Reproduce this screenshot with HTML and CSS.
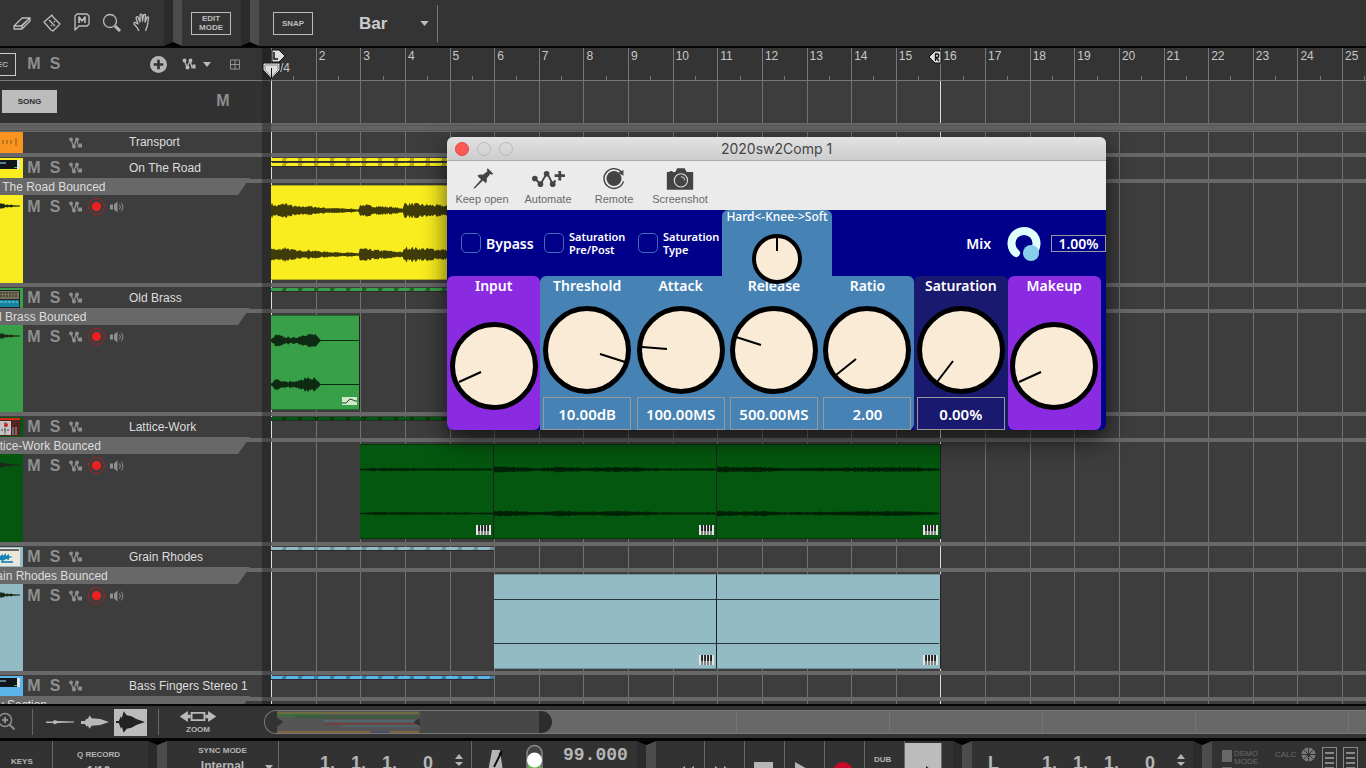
FILE: index.html
```html
<!DOCTYPE html>
<html lang="en">
<head>
<meta charset="utf-8">
<title>Sequencer</title>
<link rel="stylesheet" href="styles.css">
</head>
<body>
<svg class="defs" aria-hidden="true">
  <symbol id="auto" viewBox="0 0 16 14"><path d="M3 3.500 5.500 10.500 8.500 3.500 10.500 10.500 12.500 9.500" fill="none" stroke="currentColor" stroke-width="1.300"/><circle cx="3" cy="3.500" r="1.900"/><circle cx="6" cy="10.500" r="2"/><circle cx="9" cy="3.500" r="1.900"/><rect x="11" y="7.500" width="3" height="4"/></symbol>
  <symbol id="speaker" viewBox="0 0 16 14"><path d="M1 4.500h3v5H1zM5 4.500 8.500 1.500v11L5 9.500z"/><path d="M10.500 4.500q1.700 2.500 0 5M12.300 2.700q3.200 4.300 0 8.600" fill="none" stroke="currentColor"/></symbol>
  <symbol id="keys" viewBox="0 0 15 10"><path d="M0 0h15v10H0z" fill="#dfe8e2"/><path d="M3 0v10M6 0v10M9 0v10M12 0v10" stroke="#222"/><path d="M2.200 0h1.800v6H2.200zM5.200 0H7v6H5.200zM8.200 0H10v6H8.200zM11.200 0H13v6h-1.800z" fill="#222"/></symbol>
  <symbol id="mini" viewBox="0 0 20 12"><path d="M0 4 1 3 2.500 4 4 3.500 5 5 8 4.500 9 5.300 11 4.500 13 5.300 20 5.500 20 6.500 13 6.700 11 7.500 9 6.700 8 7.500 5 7 4 8.500 2.500 8 1 9 0 8z"/></symbol>
  <symbol id="synth" viewBox="0 0 23 21"><path d="M0 2h20v9H0z" fill="#dfe3e6"/><path d="M0 2h17v9H0z" fill="#10151a"/><path d="M0 4h6v2H0z" fill="#5d7c90"/><path d="M14 9h3v1h-3z" fill="#2fbf55"/></symbol>
  <symbol id="brass" viewBox="0 0 23 21"><path d="M0 2h20v18H0z" fill="#222"/><path d="M0 3h19v8H0z" fill="#77705d"/><path d="M0 5h18M0 8h18" stroke="#23211c" stroke-dasharray="2 1"/><path d="M0 12h19v7H0z" fill="#1684a0"/><path d="M0 14h18" stroke="#70d3e6" stroke-dasharray="3 1"/></symbol>
  <symbol id="drum" viewBox="0 0 23 21"><path d="M0 1h20v18H0z" fill="#522"/><path d="M0 1h20v2H0z" fill="#d22a15"/><path d="M0 4h11v14H0z" fill="#c3c3c3"/><path d="M1 13h9M5 5v13" stroke="#444" stroke-dasharray="2 1"/><circle cx="6" cy="8" r="2" fill="#c22"/><path d="M13 10v8M16 10v8" stroke="#aaa"/></symbol>
  <symbol id="grain" viewBox="0 0 23 21"><path d="M0 1h20v18H0z" fill="#e9e7d9"/><path d="M0 2h19v2H0z" fill="#666"/><path d="M0 9 3 7v2l3-3v3l3-2v2l4 1-4 1v2l-3-1-3 2-3-1z" fill="#1683b5"/><path d="M1 15h12" stroke="#3a95bb" stroke-width="2"/></symbol>
  <symbol id="rounds" viewBox="0 0 10 14"><path d="M5 1 9 6H1zM5 13 9 9H1z"/></symbol>
</svg>

<header class="toolbar">
  <div class="tools">
    <button aria-label="Eraser"><svg viewBox="0 0 20 20" class="line"><path d="M2 13 10 5h8l-8 8v3H2zM2 13h7l9-8v3l-8 8"/></svg></button>
    <button aria-label="Razor"><svg viewBox="0 0 20 20" class="line"><path d="M2 9 10 2l1 2 7 7-7 7-2-1z"/><path d="m7 7 6 6M9 12l1 1M12 8l1 1"/></svg></button>
    <button aria-label="Mute"><svg viewBox="0 0 20 20" class="line"><path d="M5 1h10l2 2v8l-2 2H7l-4 4V3z"/><path d="M7 10V4l3 4 3-4v6" stroke-width="1.600"/></svg></button>
    <button aria-label="Magnify"><svg viewBox="0 0 20 20" class="line"><circle cx="8" cy="8" r="6.500"/><path d="m13 13 5 5" stroke-width="3"/></svg></button>
    <button aria-label="Hand"><svg viewBox="0 0 20 20" class="line"><path d="M7 18q-1-3-5-7-.5-2 1.500-1.500L6 11 4 5q.5-2 2-1l2 5L8 2q1-1.500 2 0l.5 6 1-6q1-1 2 0l-.5 7 2-5q1.500-.5 1.500 1l-1 7q-1 3-2 6"/></svg></button>
  </div>
  <i class="bevel"></i>
  <button class="boxed">EDIT<br>MODE</button>
  <i class="bevel"></i>
  <button class="boxed snap">SNAP</button>
  <div class="grid-pick"><select aria-label="Snap value"><option>Bar</option></select><svg viewBox="0 0 10 6"><path d="M0 0h10L5 6z"/></svg></div>
</header>

<main class="arrange">
  <div class="row ruler-row">
    <div class="head top">
      <button class="rec">REC</button>
      <button class="ms">M</button><button class="ms">S</button>
      <button class="add" aria-label="Add"><svg viewBox="0 0 16 16"><circle cx="8" cy="8" r="8"/><path d="M8 3.500v9M3.500 8h9" stroke="#333" stroke-width="2.500"/></svg></button>
      <svg class="auto-lg"><use href="#auto"/></svg>
      <svg class="tri" viewBox="0 0 8 5"><path d="M0 0h8L4 5z"/></svg>
      <svg class="gridicon" viewBox="0 0 11 11"><path d="M.5.5h10v10H.5zM5.500 0v11M0 5.500h11" fill="none" stroke="currentColor"/></svg>
    </div>
    <div class="ruler" id="ruler"></div>
  </div>
  <div class="row song-row">
    <div class="head song"><button class="song-btn">SONG</button><button class="ms">M</button></div>
  </div>
  <div class="thick"></div>
  <div class="row instr first"><div class="head"><span class="swatch orange"><svg viewBox="0 0 23 21"><path d="M3 8v4M7 8v4M11 8v4M16 6v8" stroke="#8b5a1a"/></svg></span><span class="ms"></span><span class="ms"></span><svg class="auto"><use href="#auto"/></svg><span class="name">Transport</span></div></div>
  <div id="tracks"></div>

  <div class="gridlayer"><div class="bars" id="bars"></div></div>
  <div class="gutter"></div>
  <div class="locators">
    <svg class="loc-l" viewBox="0 0 24 32"><path d="M10 2h7l6 6-6 6h-7z" fill="#ddd" stroke="#111"/><path d="M12 4v7h4" fill="none" stroke="#111" stroke-width="1.500"/><path d="M1 15h17v7l-8.500 9L1 22z" fill="#e4e4e4" stroke="#111"/><path d="M3 17h13v5l-6.500 7L3 22z" fill="#ddd" stroke="#888"/><path d="M9.500 20v11" stroke="#111"/></svg>
    <svg class="loc-r" viewBox="0 0 14 14"><path d="M13 1H7L1 7l6 6h6z" fill="#ddd" stroke="#111"/><path d="M7.500 11V4h2.500q1.500 1.700 0 3.500H8l3 3.500" fill="none" stroke="#111" stroke-width="1.300"/></svg>
  </div>
</main>

<nav class="navbar">
  <svg class="zin" viewBox="0 0 20 20"><circle cx="8" cy="8" r="6.500" fill="none" stroke="currentColor" stroke-width="1.500"/><path d="M5 8h6M8 5v6M12.500 12.500l5 5" stroke="currentColor" stroke-width="2"/></svg>
  <i class="vline"></i>
  <button class="wave" aria-label="Small waveform"><svg viewBox="0 0 30 24"><path d="M0 11.500h7L9 10l3 1 17 .5v1L12 13l-3 1.500-2-1.500H0z"/></svg></button>
  <button class="wave" aria-label="Medium waveform"><svg viewBox="0 0 30 24"><path d="M0 11h4l2-3 1 1 2-4 2 3 9 1 9 3-9 3-9 1-2 3-2-3-1 1-2-3H0z"/></svg></button>
  <button class="wave on" aria-label="Large waveform"><svg viewBox="0 0 30 24"><path d="M0 11h3l2-5 1 2 2-7 3 4 5 1 5 3 9 3-9 3-5 3-5 1-3 4-2-6-1 2-2-6H0z"/></svg></button>
  <i class="vline"></i>
  <button class="zoombtn"><svg viewBox="0 0 40 12"><path d="M9 0v12L0 6zM31 0v12l9-6zM9 4h3v4H9zM28 4h3v4h-3z"/><path d="M13 2h14v8H13z" fill="none" stroke="currentColor" stroke-width="2"/></svg>ZOOM</button>
  <div class="scroll">
    <div class="thumb"><svg viewBox="0 0 143 22" preserveAspectRatio="none"><path d="M0 0h143v22H0z" fill="#555"/><path d="M0 2h142" stroke="#8b852e" stroke-width="1"/><path d="M0 4.500h47" stroke="#3c6b42" stroke-width="3"/><path d="M18 6h124" stroke="#3c5b3c" stroke-width="3"/><path d="M47 10h95" stroke="#557b86"/><path d="M47 13h95" stroke="#8a2f2f"/><path d="M64 15h78" stroke="#4d7485"/><path d="M0 21h94M113 21h29" stroke="#aa7128"/><path d="M94 21h19" stroke="#447"/><path d="M0 7q6 3 6 4t-6 4zM143 7q-6 3-6 4t6 4z" fill="#333"/></svg></div>
    <div class="rail"></div>
  </div>
</nav>

<footer class="transport">
  <div class="cell keys">KEYS</div>
  <div class="cell qrec"><span>Q RECORD</span><strong>1/16</strong></div>
  <i class="bevel up"></i>
  <div class="cell sync"><span>SYNC MODE</span><strong>Internal</strong><svg viewBox="0 0 8 5"><path d="M0 0h8L4 5z"/></svg></div>
  <div class="cell pos"><b>1.</b><b>1.</b><b>1.</b><b class="t">0</b><svg><use href="#rounds"/></svg></div>
  <div class="cell tempo">
    <svg class="metro" viewBox="0 0 18 24"><path d="M4 2h8l3 22H0z"/><path d="M6 19 14 3" stroke="#111" stroke-width="2"/><circle cx="12.500" cy="6" r="1.800" fill="#111"/></svg>
    <svg class="toggle" viewBox="0 0 17 30"><path d="M1 30V9a7.500 7.500 0 0 1 15 0v21" fill="#444" stroke="#888" stroke-width="1.500"/><path d="M2 20h13v10H2z" fill="#5fae4c"/><circle cx="8.500" cy="16" r="7.500" fill="#fff"/></svg>
    <b>99.000</b>
  </div>
  <i class="bevel up"></i>
  <div class="btns">
    <button class="w48" aria-label="Rewind"><svg viewBox="0 0 20 14"><path d="M9 0 0 7l9 7v-4L5 7l4-4zM18 0 9 7l9 7v-4l-4-3 4-4z"/></svg></button>
    <button aria-label="Forward"><svg viewBox="0 0 20 14"><path d="m1 0 9 7-9 7v-4l4-3-4-4zM10 0l9 7-9 7v-4l4-3-4-4z"/></svg></button>
    <button aria-label="Stop" class="up2"><svg viewBox="0 0 20 14"><path d="M0 0h19v14H0z"/></svg></button>
    <button aria-label="Play" class="up2"><svg viewBox="0 0 20 14"><path d="m1 0 16 9L1 18z"/></svg></button>
    <button aria-label="Record" class="up2"><svg viewBox="0 0 20 14"><circle cx="9" cy="10" r="10" fill="#c6082b"/></svg></button>
    <button class="dub">DUB</button>
    <button class="loop" aria-label="Loop"><svg viewBox="0 0 20 14"><path d="M0 5h12V1l7 5-7 5V7H0z"/></svg></button>
  </div>
  <i class="bevel up"></i>
  <div class="cell pos right"><b class="l">L</b><b>1.</b><b>1.</b><b>1.</b><b class="t">0</b><svg><use href="#rounds"/></svg></div>
  <i class="bevel up"></i>
  <div class="cell status">
    <div class="leds"><i></i><span>DEMO<br>MODE</span><i></i><span>DISK</span></div>
    <span class="calc">CALC</span>
    <svg class="wheel" viewBox="0 0 16 16"><circle cx="8" cy="8" r="7.500"/><path d="M8 0v16M0 8h16M2.500 2.500l11 11M13.500 2.500l-11 11" stroke="#333" stroke-width="1"/><circle cx="8" cy="8" r="2" fill="#333"/></svg>
    <i class="meter"></i><i class="meter"></i>
  </div>
</footer>

<section class="plugin" aria-label="2020sw2Comp 1">
  <div class="titlebar"><button class="dot close" aria-label="Close"></button><button class="dot" aria-label="Minimize"></button><button class="dot" aria-label="Zoom"></button><h1>2020sw2Comp 1</h1></div>
  <div class="actions">
    <button><svg viewBox="0 0 34 24"><path d="m23 1 6 6-2 1-1-1-4 5q1 3-1 5l-3-3-9 9-1-1 8-9-4-4q3-2 6-1l5-4-1-1z"/></svg>Keep open</button>
    <button><svg viewBox="0 0 34 24"><path d="M3 12 9 18 16 6 22 18 25 14" fill="none" stroke="currentColor" stroke-width="2"/><path d="M24 9h11M29.500 4v10" stroke="currentColor" stroke-width="3"/><circle cx="3" cy="12" r="3"/><circle cx="9" cy="18" r="3"/><circle cx="15.500" cy="7" r="3"/><circle cx="22" cy="18" r="3"/></svg>Automate</button>
    <button><svg viewBox="0 0 34 24"><circle cx="17" cy="12" r="8"/><path d="M25.500 6A10.500 10.500 0 1 0 27 15" fill="none" stroke="currentColor" stroke-width="1.500"/><path d="M21.500 6 27 9V3z"/></svg>Remote</button>
    <button><svg viewBox="0 0 34 24"><path d="M3 5h3V4h3v1h3l2-4h8l2 4h7v19H3z"/><circle cx="18" cy="14" r="7" fill="none" stroke="#ddd" stroke-width="1.200"/><path d="M18 10a4 4 0 0 1 4 4" fill="none" stroke="#ddd"/></svg>Screenshot</button>
  </div>
  <div class="fx">
    <div class="options">
      <label class="big"><input type="checkbox">Bypass</label>
      <label><input type="checkbox"><span>Saturation<br>Pre/Post</span></label>
      <label><input type="checkbox"><span>Saturation<br>Type</span></label>
      <label class="knee"><span>Hard&lt;-Knee-&gt;Soft</span><svg viewBox="-25 -25 50 50"><circle r="23" fill="#faebd7" stroke="#000" stroke-width="4"/><path d="M0-21V-8" stroke="#000" stroke-width="2"/></svg><input type="range"></label>
      <div class="mix"><label for="mix">Mix</label><svg viewBox="0 0 36 36"><path d="M10 28A12.500 12.500 0 1 1 26 28" fill="none" stroke="#e0ffff" stroke-width="8" stroke-linecap="round"/><circle cx="25" cy="28" r="8" fill="#87ceeb"/></svg><input id="mix" type="text" value="1.00%"></div>
    </div>
    <div class="knobs">
      <div class="knob purple"><label>Input<svg viewBox="-44 -44 88 88"><circle r="41.500"/><path d="M-13 6-35 16"/></svg><input type="range"></label></div>
      <div class="knob blue start"><label>Threshold<svg viewBox="-44 -44 88 88"><circle r="41.500"/><path d="M13 4 38 12"/></svg><input type="range"></label><input type="text" value="10.00dB" aria-label="Threshold value"></div>
      <div class="knob blue"><label>Attack<svg viewBox="-44 -44 88 88"><circle r="41.500"/><path d="M-14-1-39-3"/></svg><input type="range"></label><input type="text" value="100.00MS" aria-label="Attack value"></div>
      <div class="knob blue"><label>Release<svg viewBox="-44 -44 88 88"><circle r="41.500"/><path d="M-13-5-38-13"/></svg><input type="range"></label><input type="text" value="500.00MS" aria-label="Release value"></div>
      <div class="knob blue end"><label>Ratio<svg viewBox="-44 -44 88 88"><circle r="41.500"/><path d="M-11 9-31 25"/></svg><input type="range"></label><input type="text" value="2.00" aria-label="Ratio value"></div>
      <div class="knob dark"><label>Saturation<svg viewBox="-44 -44 88 88"><circle r="41.500"/><path d="M-8 11-24 32"/></svg><input type="range"></label><input type="text" value="0.00%" aria-label="Saturation value"></div>
      <div class="knob purple"><label>Makeup<svg viewBox="-44 -44 88 88"><circle r="41.500"/><path d="M-13 6-35 16"/></svg><input type="range"></label></div>
    </div>
  </div>
</section>
<script src="script.js"></script>
</body>
</html>
```
FILE: styles.css
```css
* { box-sizing: border-box; }
body { margin: 0; height: 100vh; overflow: hidden; display: flex; flex-direction: column; background: #333; color: #ddd; font: 12px "Liberation Sans", Arial, sans-serif; }
button, select, input { font: inherit; color: inherit; background: none; border: 0; padding: 0; margin: 0; }
svg { fill: currentColor; overflow: visible; display: block; }
.defs { position: absolute; width: 0; height: 0; }

/* toolbar */
.toolbar { height: 48px; flex: none; display: flex; align-items: center; background: #343434; border-bottom: 2px solid #050505; color: #bdbdbd; }
.tools { display: flex; gap: 10px; padding: 0 12px; }
.tools button, .tools svg { width: 20px; height: 20px; }
.line { fill: none; stroke: currentColor; stroke-width: 1.3; stroke-linejoin: round; }
.bevel { flex: none; width: 18px; align-self: stretch; background: linear-gradient(90deg, #2b2b2b 50%, #4c4c4c 50%); }
.bevel::after { content: ""; display: block; height: 100%; background: #000; clip-path: polygon(0 100%, 50% calc(100% - 4px), 100% 100%); }
.bevel.up { width: 19px; }
.bevel.up::after { clip-path: polygon(0 0, 50% 4px, 100% 0); }
.boxed { width: 40px; height: 23px; margin: 0 10px 0 9px; border: 1px solid #bbb; font-size: 8px; font-weight: bold; line-height: 9px; }
.boxed.snap { margin: 0 34px 0 14px; }
.grid-pick { display: flex; align-items: center; width: 91px; height: 37px; border-right: 1px solid #777; padding-right: 8px; justify-content: space-between; }
.grid-pick select { appearance: none; width: 60px; padding-left: 12px; font-size: 17px; font-weight: bold; color: #ccc; }
.grid-pick svg { width: 9px; height: 5px; }

/* arrangement */
.arrange { flex: 1; min-height: 0; position: relative; overflow: hidden; background: #3d3d3d; --bar: calc(100% / 24.53); }
.row { display: grid; grid-template-columns: 262px 1fr; column-gap: 9px; position: relative; z-index: 1; }
.head { display: flex; align-items: center; color: #8f8f8f; min-width: 0; }
.ruler-row { height: 33px; border-bottom: 1px solid #777; background: #343434; z-index: 0; }
.head.top { color: #aaa; }
.ms { width: 16px; margin-right: 5px; font-size: 16px; font-weight: bold; text-align: center; color: #8f8f8f; line-height: 20px; }
.rec { width: 36px; height: 23px; margin: 0 10px 0 -20px; border: 1px solid #ccc; font-size: 8px; font-weight: bold; text-align: right; padding-right: 7px; flex: none; }
.add { margin-left: 82px; }
.add svg { width: 17px; height: 17px; color: #b5b5b5; }
.auto-lg { width: 19px; height: 14px; margin-left: 13px; color: #bbb; }
.tri { width: 8px; height: 5px; margin-left: 4px; color: #bbb; }
.gridicon { width: 10px; height: 11px; margin-left: 19px; color: #999; }
.song-row { height: 42px; }
.head.song { background: #323232; justify-content: space-between; padding: 0 26px 2px 2px; }
.song-btn { width: 55px; height: 23px; background: #bcbcbc; color: #2c2c2c; font-size: 8px; font-weight: bold; }
.thick { height: 9px; position: relative; z-index: 1; background: linear-gradient(#666 2px, #585858 2px 3px, #626262 3px 7px, #555 7px 8px, #6a6a6a 8px); }
.ruler { display: flex; overflow: hidden; }
.ruler span { flex: none; width: var(--bar); height: 32px; padding: 1px 0 0 2px; border-left: 1px solid #777; color: #c8c8c8; line-height: 15px; background: linear-gradient(#777, #777) 50% 100% / 1px 4px no-repeat; white-space: pre; }
.ruler span:first-child { padding: 13px 0 0 8px; }

.instr { height: 22px; color: #ddd; }
.instr.first { height: 21px; }
.swatch { width: 23px; height: 21px; margin-right: 3px; flex: none; background: var(--c); }
.swatch svg { width: 23px; height: 21px; }
.orange { background: #f9951e; }
.auto { width: 16px; height: 14px; margin-right: 4px; flex: none; }
.name { color: #ddd; margin-left: auto; width: 133px; white-space: nowrap; line-height: 20px; height: 21px; }
.track { border-top: 4px solid #686868; position: relative; z-index: 1; }
.audio { height: 104px; border-top: 4px solid #686868; }
.track:nth-child(even) .audio { height: 103px; }
.left { margin-top: -5px; display: flex; flex-direction: column; min-width: 0; }
.tab { height: 17px; width: 250px; flex: none; background: #686868; clip-path: polygon(0 0, 100% 0, 238px 100%, 0 100%); text-indent: -17px; line-height: 18px; color: #ddd; white-space: nowrap; }
.body { flex: 1; display: flex; color: #8f8f8f; }
.chip { width: 23px; margin-right: 3px; padding-top: 5px; background: var(--c); color: #1b2a18; }
.chip svg { width: 20px; height: 12px; }
.ctl { display: flex; height: 23px; align-items: center; }
.recdot { width: 17px; height: 17px; border-radius: 50%; border: 1px solid #a92222; background: radial-gradient(circle, #ee1f1f 4px, transparent 5px); margin-right: 4px; }
.spk { width: 16px; height: 14px; }
.lane { display: flex; overflow: hidden; }
.notes { flex: none; height: 4px; width: calc(var(--bar) * var(--n)); background: repeating-linear-gradient(110deg, var(--c) 0 11px, var(--d) 11px 15px); border-bottom: 1px solid #2a2a2a; }
.instr .lane { flex-direction: column; gap: 1px; padding-top: 1px; }
.clip { flex: none; height: 95px; margin-top: 2px; width: calc(var(--bar) * var(--n)); background: var(--c); border: 1px solid var(--d); border-left-width: 0; border-right-color: #222; display: flex; flex-direction: column; position: relative; }
.skip { flex: none; width: calc(var(--bar) * var(--n)); }
.clip > svg.wv { width: 100%; height: 93px; flex: none; }
.clip .badge { position: absolute; right: 2px; bottom: 3px; width: 15px; height: 10px; }
.gridlayer { position: absolute; inset: 33px 0 0 271px; }
.bars { display: flex; height: 100%; overflow: hidden; }
.bars i { flex: none; width: var(--bar); border-left: 1px solid #717171; }
.bars i:first-child, .bars i:nth-child(16) { border-color: #ddd; }
.gutter { position: absolute; z-index: 2; top: 0; bottom: 0; left: 262px; width: 9px; background: rgba(0,0,0,.28); }
.locators { position: absolute; z-index: 3; inset: 0 0 auto 271px; height: 33px; }
.loc-l { position: absolute; left: -9px; top: 0; width: 24px; height: 32px; }
.loc-r { position: absolute; left: calc(var(--bar) * 15 - 13px); top: 2px; width: 14px; height: 14px; }

/* overview strip */
.navbar { flex: none; height: 34px; display: flex; align-items: center; border-top: 2px solid #060606; background: #333; color: #b8b8b8; position: relative; }
.zin { width: 20px; height: 20px; margin: 0 15px 0 -3px; color: #8d8d8d; flex: none; }
.vline { width: 1px; height: 26px; background: #666; flex: none; }
.wave { width: 33px; height: 27px; padding: 0 2px; flex: none; margin-left: 2px; }
.wave:first-of-type { margin-left: 11px; }
.wave svg { width: 29px; height: 24px; }
.wave.on { background: #bcbcbc; color: #222; margin-right: 11px; }
.zoombtn { width: 40px; margin: 0 46px 0 19px; font-size: 8px; font-weight: bold; flex: none; }
.zoombtn svg { width: 40px; height: 11px; margin-bottom: 3px; }
.scroll { flex: 1; height: 24px; display: flex; border: 1px solid #777; border-right: 0; border-radius: 12px 0 0 12px; background: #333; overflow: hidden; padding-left: 12px; }
.thumb { width: 275px; flex: none; background: linear-gradient(90deg, #474747 262px, #2c2c2c 262px); border-radius: 0 12px 12px 0; z-index: 1; }
.thumb svg { width: 143px; height: 22px; }
.rail { flex: 1; margin-left: -12px; background: repeating-linear-gradient(90deg, #686868 0 152px, #757575 152px 153px) 44px 0; }

/* transport */
.transport { flex: none; height: 30px; border-top: 3px solid #050505; display: flex; overflow: hidden; background: #323232; color: #b5b5b5; font-size: 8px; font-weight: bold; }
.cell { flex: none; display: flex; border-right: 1px solid #686868; position: relative; }
.keys { width: 53px; padding: 16px 0 0 11px; }
.qrec { width: 95px; flex-direction: column; align-items: center; padding: 9px 4px 0 0; border: 0; }
.qrec strong, .sync strong { font-size: 12px; margin-top: 5px; line-height: 14px; }
.sync { width: 112px; flex-direction: column; align-items: center; padding-top: 5px; border-right: 1px solid #686868; }
.sync svg { position: absolute; right: 5px; top: 24px; width: 8px; height: 5px; }
.sync strong { margin-top: 4px; }
.pos { width: 193px; padding: 12px 0 0 41px; font-size: 18px; line-height: 20px; }
.pos b { width: 31px; flex: none; }
.pos b.t { width: 31px; margin-left: 10px; }
.pos svg { width: 10px; height: 14px; flex: none; }
.pos.right { flex: 1; min-width: 219px; padding-left: 16px; border: 0; }
.pos b.l { width: 54px; }
.tempo { width: 165px; gap: 20px; border: 0; padding-left: 16px; }
.metro { width: 18px; height: 24px; margin-top: 7px; }
.toggle { width: 17px; height: 30px; margin: 3px 0; flex: none; }
.tempo b { font: bold 18px/20px "Liberation Mono", monospace; margin-top: 4px; }
.btns { display: flex; flex: none; width: 297px; }
.btns button { width: 40px; padding: 25px 9px 0; border-right: 1px solid #686868; display: flex; flex: none; align-items: flex-start; }
.btns button.w48 { width: 49px; padding-left: 20px; }
.btns .up2 { padding-top: 21px; }
.btns svg { width: 20px; height: 14px; flex: none; }
.btns .dub { padding: 14px 0 0 9px; }
.btns .loop { width: 37px; padding: 22px 9px 0; margin: 2px 0 0; background: #bcbcbc; color: #222; height: 40px; }
.status { width: 154px; border: 0; padding-left: 10px; color: #6b6b66; font-weight: normal; }
.leds { display: grid; grid-template-columns: 10px 1fr; gap: 1px 2px; width: 46px; padding-top: 9px; line-height: 8px; align-content: start; }
.leds i { height: 12px; background: #686868; }
.leds span { height: 16px; }
.calc { margin: 9px 6px 0 7px; width: 20px; }
.wheel { width: 15px; height: 15px; margin-top: 6px; flex: none; color: #777; }
.meter { width: 15px; height: 40px; margin: 6px 0 0 6px; flex: none; border: 1px solid #888; background: repeating-linear-gradient(#333 0 3px, #888 3px 5px) content-box; padding: 1px 2px; }

/* plugin window */
.plugin { position: absolute; left: 447px; top: 137px; width: 659px; border-radius: 6px; overflow: hidden; box-shadow: 0 10px 24px rgba(0,0,0,.65); z-index: 10; color: #fff; font-family: "Noto Sans", "Open Sans", sans-serif; font-weight: 600; }
.titlebar { display: grid; grid-template-columns: 14px 14px 14px 1fr; gap: 8px; padding: 0 74px 0 8px; align-items: center; height: 24px; background: linear-gradient(#e2e2e2, #cdcdcd); border-bottom: 1px solid #aaa; }
.titlebar h1 { margin: 0; font: 14px "Inter", sans-serif; color: #454545; text-align: center; }
.dot { width: 14px; height: 14px; border-radius: 50%; border: 1px solid #b9b9b9; }
.dot.close { background: #fc5b54; border-color: #e2463f; }
.actions { display: flex; height: 49px; background: #ebebeb; padding: 6px 0 0 2px; }
.actions button { width: 66px; display: flex; flex-direction: column; align-items: center; gap: 3px; font: 11px "Liberation Sans", Arial, sans-serif; color: #696969; }
.actions svg { width: 32px; height: 23px; color: #444; }
.fx { background: #00008b; }
.options { height: 66px; display: flex; align-items: center; padding-left: 14px; }
.options label { display: flex; align-items: center; gap: 5px; font-size: 11px; line-height: 13px; width: 94px; flex: none; position: relative; }
.options label.big { font-size: 14px; width: 83px; }
.options input[type=checkbox] { appearance: none; width: 20px; height: 20px; flex: none; border: 1px solid #4a68b8; border-radius: 5px; }
.options label.knee { flex-direction: column; gap: 9px; width: 110px; height: 66px; margin-left: -10px; background: #4682b4; border-radius: 6px 6px 0 0; z-index: 1; }
.knee span { white-space: nowrap; font-size: 12px; font-weight: 500; }
.knee svg { width: 50px; height: 50px; flex: none; margin-top: 2px; }
input[type=range] { position: absolute; inset: 24px 0 0; opacity: 0; width: 100%; }
.mix { margin-left: auto; display: flex; align-items: center; font-size: 14px; }
.options .mix label { width: auto; font-size: 14px; margin-right: 15px; }
.mix svg { width: 36px; height: 36px; margin-right: 9px; }
.mix input { width: 55px; height: 17px; border: 1px solid #999; text-align: center; font-size: 14px; line-height: 15px; }
.knobs { display: flex; padding-right: 5px; height: 154px; }
.knob { flex: 1; display: flex; flex-direction: column; align-items: center; justify-content: space-between; }
.knob label { display: flex; flex-direction: column; align-items: center; font-size: 14px; line-height: 20px; gap: 10px; position: relative; }
.knob svg { width: 88px; height: 88px; }
.knob circle { fill: #faebd7; stroke: #000; stroke-width: 5; }
.knob path { stroke: #000; stroke-width: 2; }
.knob > input { width: 88px; height: 33px; border: 1px solid #999; text-align: center; font-size: 15px; }
.purple { background: #8a2be2; border-radius: 6px; }
.purple label { gap: 26px; }
.blue { background: #4682b4; }
.start { border-radius: 6px 0 0 0; }
.end { border-radius: 0 6px 6px 0; }
.dark { background: #191970; border-radius: 6px 6px 0 0; }
```
FILE: script.js
```js
const ruler = document.getElementById("ruler");
const bars = document.getElementById("bars");
for (let n = 1; n <= 25; n++) {
  const s = document.createElement("span");
  s.textContent = n === 1 ? "/4" : n;
  ruler.append(s);
  bars.append(document.createElement("i"));
}

// Envelopes are [position 0..1, amplitude px] pairs
const loud = [[0, 8], [0.03, 5], [0.08, 8], [0.12, 5], [0.16, 4], [0.2, 5], [0.3, 3], [0.498, 1.5], [0.5, 6.5], [0.57, 5], [0.66, 4], [0.745, 2.5], [0.75, 8], [0.85, 6.5], [1, 5]];
const tracks = [
  { name: "On The Road", c: "#f9ed1f", d: "#b5ab16", icon: "synth", notes: [4, 4], ink: "#3f3c0a",
    clips: [{ n: 4, env: loud }] },
  { name: "Old Brass", c: "#37a048", d: "#1d6b2c", icon: "brass", notes: [4], ink: "#0e2a13",
    clips: [{ n: 2, badge: "audio", env: [[0, 1], [0.06, 6.5], [0.14, 4], [0.28, 3], [0.38, 7], [0.5, 6.5], [0.56, 0.6], [1, 0.6]] }] },
  { name: "Lattice-Work", c: "#04570f", d: "#023a08", icon: "drum", notes: [4], ink: "#022005",
    clips: [{ skip: 2 }, { n: 3, badge: "keys", env: [[0, 0.6], [0.1, 1.5], [0.6, 1.2], [1, 1]] },
      { n: 5, badge: "keys", env: [[0, 3], [0.1, 2.5], [0.2, 1.4], [0.3, 3], [0.4, 1.8], [0.6, 2.6], [0.75, 1.2], [1, 1.2]] },
      { n: 5, badge: "keys", env: [[0, 3], [0.1, 2.2], [0.2, 2.8], [0.3, 1.4], [0.5, 1.8], [0.8, 2.6], [1, 1.2]] }] },
  { name: "Grain Rhodes", c: "#93bbc6", d: "#71919a", icon: "grain", notes: [5], ink: "#26363b",
    clips: [{ skip: 5 }, { n: 5, badge: "keys", env: [[0, 0.5], [1, 0.5]] }, { n: 5, badge: "keys", env: [[0, 0.5], [1, 0.5]] }] },
  { name: "Bass Fingers Stereo 1", bus: "Key Section", c: "#5bb4ea", d: "#3d7fa8", icon: "synth", notes: [5], clips: [] }
];

let seed = 7;
const rnd = () => (seed = (seed * 16807) % 2147483647) / 2147483647;

function wave(env, width, ink) {
  let d = "";
  for (const mid of [24.5, 68.5]) {
    const up = [], down = [];
    for (let x = 0; x <= width; x++) {
      const t = x / width;
      const k = Math.max(1, env.findIndex(e => e[0] >= t));
      const a = env[k - 1], b = env[k];
      const base = a[1] + (b[1] - a[1]) * (t - a[0]) / (b[0] - a[0]);
      const j = base < 0.7 ? 1 : 0.6 + rnd() * 0.5;
      up.push(x + " " + (mid - base * j).toFixed(1));
      down.unshift(x + " " + (mid + base * j).toFixed(1));
    }
    d += "M" + up.join("L") + "L" + down.join("L") + "Z";
  }
  return `<svg class="wv" viewBox="0 0 ${width} 93" preserveAspectRatio="none"><path d="${d}" fill="${ink}"/></svg>`;
}

const badges = {
  keys: '<svg class="badge"><use href="#keys"/></svg>',
  audio: '<svg class="badge" viewBox="0 0 15 10"><path d="M0 1h15v8H0z" fill="#cfeacb"/><path d="M0 7h4l4-4 3 1 2 1h2" fill="none" stroke="#1d4a24"/></svg>'
};
const auto = '<svg class="auto"><use href="#auto"/></svg>';
const ms = '<button class="ms">M</button><button class="ms">S</button>';

document.getElementById("tracks").innerHTML = tracks.map(t => `
  <section class="track" style="--c:${t.c};--d:${t.d}">
    <div class="row instr">
      <div class="head"><span class="swatch"><svg><use href="#${t.icon}"/></svg></span>${ms}${auto}<span class="name">${t.name}</span></div>
      <div class="lane">${t.notes.map(n => `<div class="notes" style="--n:${n}"></div>`).join("")}</div>
    </div>
    <div class="row audio">
      <div class="left"><div class="tab">${t.bus || t.name + " Bounced"}</div>
        <div class="body"><div class="chip"><svg><use href="#mini"/></svg></div>
        <div class="ctl">${ms}${auto}<span class="recdot"></span><svg class="spk"><use href="#speaker"/></svg></div></div>
      </div>
      <div class="lane">${t.clips.map(c => c.skip
        ? `<div class="skip" style="--n:${c.skip}"></div>`
        : `<div class="clip" style="--n:${c.n}">${wave(c.env, Math.round(c.n * 44.6), t.ink)}${badges[c.badge] || ""}</div>`).join("")}</div>
    </div>
  </section>`).join("");
```
